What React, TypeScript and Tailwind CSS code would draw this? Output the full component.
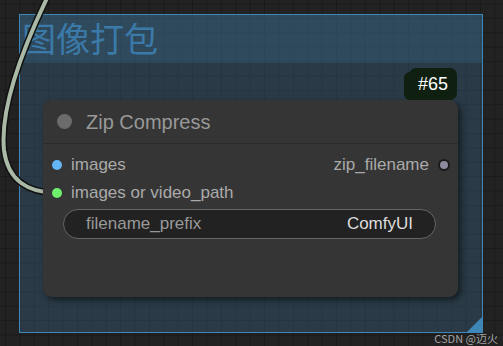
import React from "react";

const sans = "font-['Liberation_Sans',Arial,sans-serif]";

export default function App() {
  return (
    <div className="relative h-[346px] w-[503px] overflow-hidden bg-[#222222] bg-[linear-gradient(to_right,#1a1a1a_1px,transparent_1px),linear-gradient(to_bottom,#1a1a1a_1px,transparent_1px)] bg-[length:14.4px_14.4px] bg-[position:5px_3.5px]">
      {/* group */}
      <div className="absolute left-[19px] top-[14px] flex h-[319px] w-[464px] flex-col border border-[#3f86b8] bg-[#3f789e]/30">
        <div className="flex h-[48px] items-center bg-[#3f789e]/25 pb-[2px] pl-[2px] font-['Noto_Sans_CJK_SC',sans-serif] text-[34px] leading-none text-[#3b7aa8]">
          图像打包
        </div>
        <div className="flex-1" />
        <svg className="absolute bottom-0 right-0" width="15" height="15" viewBox="0 0 15 15">
          <path d="M15 0 L15 15 L0 15 Z" fill="#3f86b8" />
        </svg>
      </div>

      {/* link wire */}
      <svg className="absolute left-0 top-0" width="503" height="346">
        <path
          d="M48 -4 C 22 50, 0 110, 4 150 C 8 182, 30 193, 57 193"
          fill="none"
          stroke="#111"
          strokeWidth="7"
        />
        <path
          d="M48 -4 C 22 50, 0 110, 4 150 C 8 182, 30 193, 57 193"
          fill="none"
          stroke="#a9b9a6"
          strokeWidth="4"
        />
      </svg>

      {/* node */}
      <div className={`absolute left-[43px] top-[100px] flex h-[197px] w-[415px] flex-col rounded-[9px] bg-[#353535] shadow-[3px_3px_6px_rgba(0,0,0,0.55)] ${sans}`}>
        <div className="flex h-[44px] items-center gap-[14px] border-b border-[#2b2b2b] pl-[14px]">
          <span className="h-[15px] w-[15px] rounded-full bg-[#6b6b6b]" />
          <span className="text-[20px] text-[#999999]">Zip Compress</span>
        </div>
        <div className="flex flex-col pt-[7px]">
          <div className="flex h-[28px] items-center justify-between pl-[9px] pr-[8px]">
            <div className="flex items-center gap-[9px]">
              <span className="h-[10px] w-[10px] rounded-full bg-[#64b5f6]" />
              <span className="text-[17px] text-[#aaaaaa]">images</span>
            </div>
            <div className="flex items-center gap-[9px]">
              <span className="text-[17px] text-[#aaaaaa]">zip_filename</span>
              <span className="h-[12px] w-[12px] rounded-full border-2 border-[#1a1a1a] bg-[#8c8a9c]" />
            </div>
          </div>
          <div className="flex h-[28px] items-center pl-[9px]">
            <div className="flex items-center gap-[9px]">
              <span className="h-[10px] w-[10px] rounded-full bg-[#6ef06e]" />
              <span className="text-[17px] text-[#aaaaaa]">images or video_path</span>
            </div>
          </div>
          <div className="ml-[20px] mt-[2px] flex h-[30px] w-[373px] items-center justify-between rounded-full border border-[#666666] bg-[#222222] pl-[22px] pr-[22px] text-[17px]">
            <span className="text-[#999999]">filename_prefix</span>
            <span className="text-[#dddddd]">ComfyUI</span>
          </div>
        </div>
      </div>

      {/* id badge */}
      <div className="absolute left-[404px] top-[72px] h-[28px] w-[20px] rounded-l-[6px] bg-[#0f1f10]" />
      <div className={`absolute left-[409px] top-[68px] flex h-[32px] w-[48px] items-center justify-center rounded-[7px] bg-[#0f1f10] text-[18px] text-white ${sans}`}>
        #65
      </div>

      {/* watermark */}
      <div className="absolute bottom-[2px] right-[5px] font-['Noto_Sans_CJK_SC',sans-serif] text-[11px] leading-none text-[#c8c8c8]/80">
        CSDN @迈火
      </div>
    </div>
  );
}
